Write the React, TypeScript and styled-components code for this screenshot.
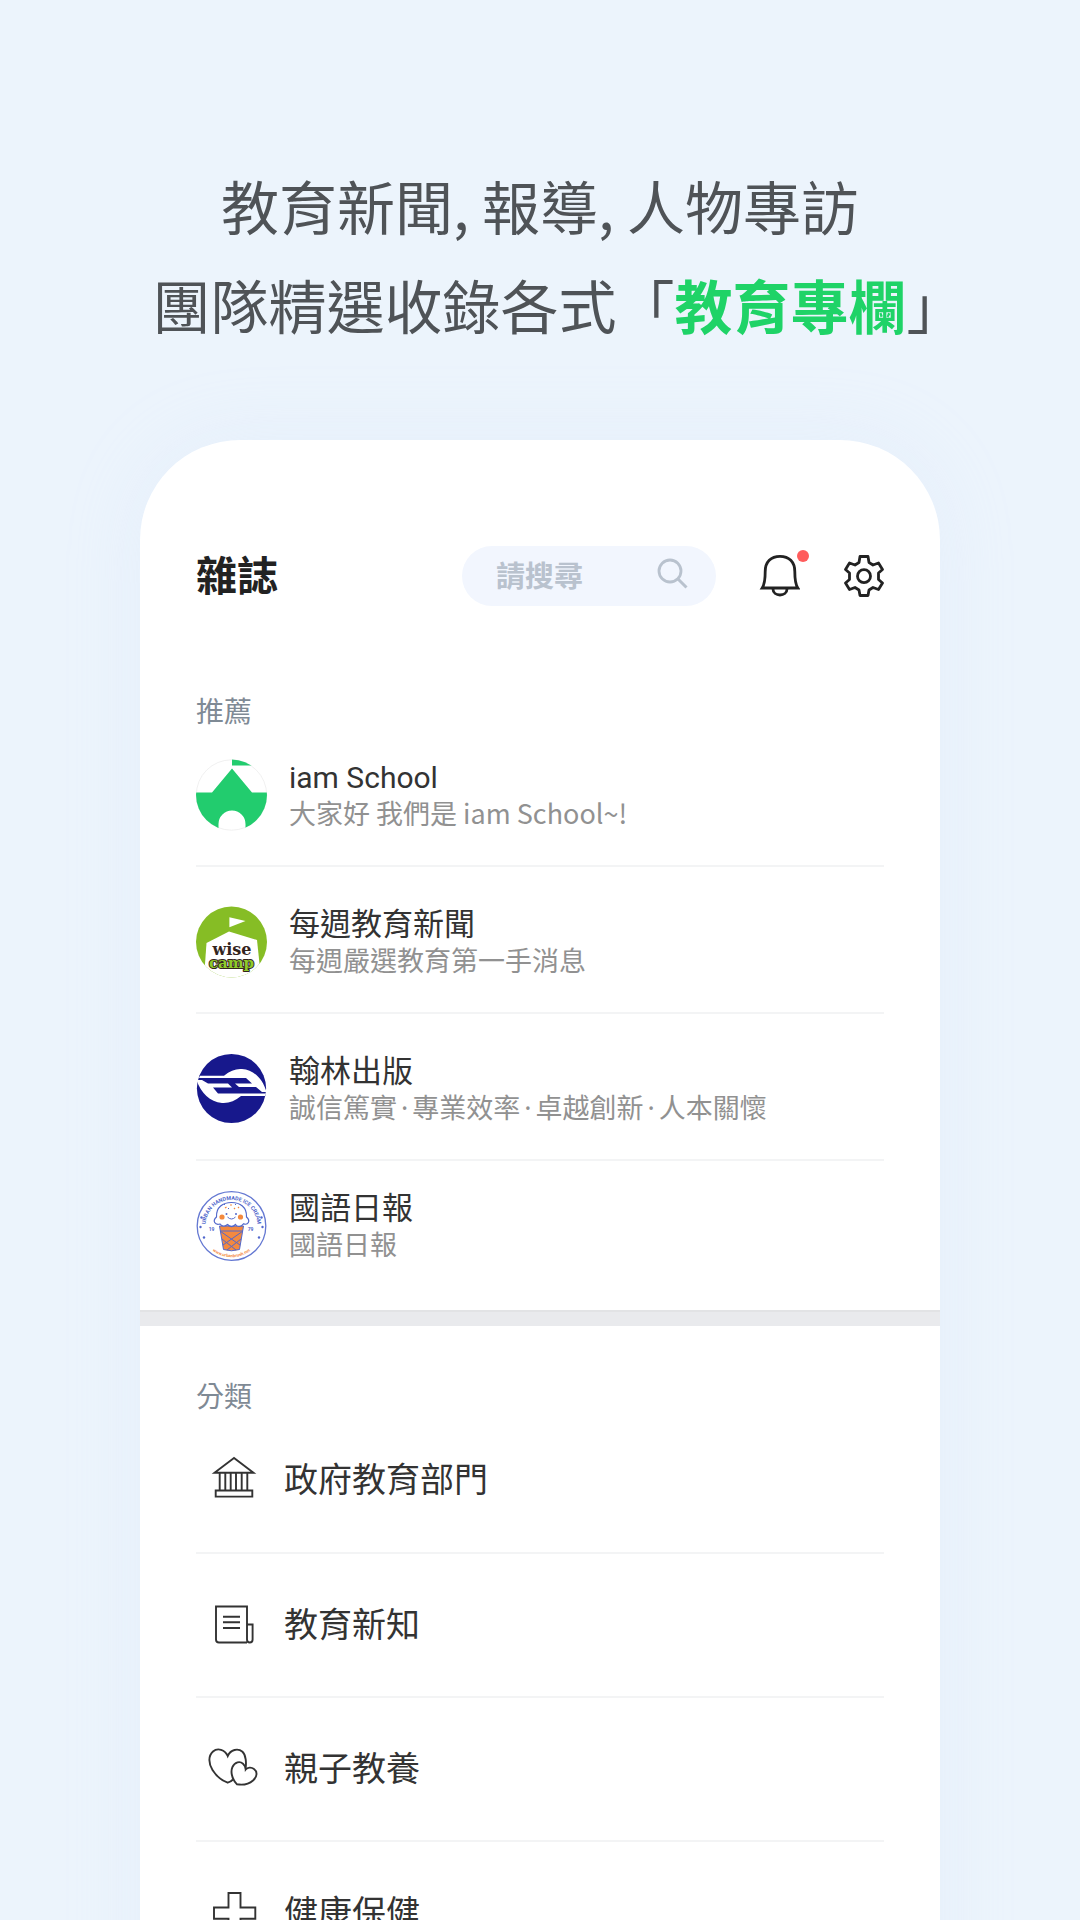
import React from "react";
import styled, { createGlobalStyle } from "styled-components";

const GlobalStyle = createGlobalStyle`
  *, *::before, *::after { box-sizing: border-box; }
  body {
    margin: 0;
    background: #ecf4fc;
    font-family: "Noto Sans CJK TC", "Noto Sans", sans-serif;
  }
`;

const Page = styled.div`
  display: flex;
  flex-direction: column;
  height: 100vh;
  overflow: hidden;
  padding: 156px 140px 0;
  background: #ecf4fc;
`;

const Headline = styled.h1`
  margin: 0 -60px 86px;
  color: #4f5357;
  font-size: 58px;
  font-weight: 400;
  line-height: 99px;
  text-align: center;
`;

const HeadlineLine = styled.span`
  display: block;
  white-space: nowrap;
`;

const Highlight = styled.strong`
  color: #1fd367;
  font-weight: 700;
`;

const HangingBracket = styled.span`
  margin-right: -8px;
  font-feature-settings: "halt";
`;

const Card = styled.main`
  flex: 1 0 auto;
  padding-top: 106px;
  border-radius: 100px 100px 0 0;
  background: #fff;
  box-shadow: 0 0 70px rgba(212, 228, 252, 0.28);
`;

const Header = styled.header`
  display: flex;
  align-items: center;
  padding: 0 56px;
`;

const Title = styled.h2`
  flex: 1;
  margin: 0;
  padding-bottom: 6px;
  color: #222;
  font-size: 41px;
  font-weight: 700;
  line-height: 54px;
`;

const SearchBox = styled.label`
  display: flex;
  align-items: center;
  width: 254px;
  height: 60px;
  padding: 0 28px 4px 34px;
  border-radius: 30px;
  background: #f2f6fe;
`;

const SearchInput = styled.input`
  flex: 1;
  min-width: 0;
  height: 44px;
  padding: 0;
  border: 0;
  outline: 0;
  background: transparent;
  color: #4f5357;
  font: 700 29px/44px "Noto Sans CJK TC", sans-serif;
  &::placeholder { color: #b9c2ce; opacity: 1; }
`;

const IconButton = styled.button`
  position: relative;
  display: flex;
  align-items: center;
  justify-content: flex-end;
  width: 42px;
  height: 44px;
  margin-left: 42px;
  padding: 0;
  border: 0;
  background: none;
`;

const Dot = styled.span`
  position: absolute;
  top: -4px;
  right: -9px;
  width: 12px;
  height: 12px;
  border-radius: 50%;
  background: #ff5c5c;
`;

const Section = styled.section<{ $top: number; $bottom: number }>`
  padding: ${(p) => p.$top}px 56px ${(p) => p.$bottom}px;
`;

const SectionLabel = styled.h3`
  margin: 0;
  padding-bottom: 2px;
  color: #7f8a95;
  font-size: 28px;
  font-weight: 400;
  line-height: 38px;
`;

const List = styled.ul`
  margin: 0;
  padding: 0;
  list-style: none;
`;

const Row = styled.li`
  border-bottom: 2px solid #f3f4f5;
  &:last-child { border-bottom: 0; }
`;

const MagazineLink = styled.a`
  display: flex;
  align-items: center;
  gap: 21px;
  padding: 36px 0 31px;
  color: inherit;
  text-decoration: none;
  ${Row}:first-child & { padding-top: 25px; }
  ${Row}:last-child & { padding: 26px 0 0; }
`;

const MagazineText = styled.div`
  display: flex;
  flex-direction: column;
  padding-bottom: 2px;
  line-height: 38px;
  white-space: nowrap;
`;

const MagazineName = styled.span`
  color: #333;
  font-size: 31px;
`;

const LatinName = styled.span`
  font-family: Roboto, sans-serif;
  font-size: 30px;
  line-height: 1;
`;

const MagazineNote = styled.span`
  color: #919191;
  font-size: 27px;
`;

const MiddleDot = styled.span`
  margin: 0 4px;
  font-family: "Noto Sans", sans-serif;
  line-height: 1;
`;

const Divider = styled.hr`
  height: 16px;
  margin: 0;
  border: 0;
  border-top: 2px solid #e2e3e5;
  background: #e9eaed;
`;

const CategoryLink = styled.a`
  display: flex;
  align-items: center;
  gap: 26px;
  height: 142px;
  padding: 0 0 2px 12px;
  color: #333;
  font-size: 34px;
  line-height: 48px;
  text-decoration: none;
  ${Row}:first-child & { height: 136px; padding-bottom: 10px; }
`;

const CategoryName = styled.span`
  padding-bottom: 2px;
`;

const Avatar = styled.svg`
  flex: none;
  width: 72px;
  height: 72px;
`;

const LineIcon = styled.svg`
  flex: none;
  width: 50px;
  height: 50px;
  fill: none;
  stroke: #333;
  stroke-width: 1.9;
`;

const SchoolLogo = () => (
  <Avatar viewBox="0 0 72 72" aria-hidden="true">
    <defs>
      <clipPath id="school-clip"><circle cx="35.5" cy="36" r="35.5" /></clipPath>
    </defs>
    <circle cx="35.5" cy="36" r="35.2" fill="#fff" stroke="#ececec" strokeWidth="0.8" />
    <g clipPath="url(#school-clip)" fill="#22cc6e">
      <path d="M36 0H72V6.5H36Z" />
      <path d="M0 33.5H16L36 9.5L56 33.5H72V72H49.5V65a13.5 13.5 0 0 0-27 0V72H0Z" />
    </g>
  </Avatar>
);

const WiseCampLogo = () => (
  <Avatar viewBox="0 0 72 72" aria-hidden="true">
    <defs>
      <clipPath id="camp-clip"><circle cx="35.5" cy="36" r="35.5" /></clipPath>
    </defs>
    <g clipPath="url(#camp-clip)">
      <rect width="72" height="72" fill="#86bd25" />
      <path d="M33 25.5L10.5 37L8 72H65L61 34Z" fill="#fff" />
      <path d="M33.4 11.3L49.5 15L33.4 21.3Z" fill="#fff" />
      <g fontFamily="DejaVu Serif, serif" fontWeight="700" textAnchor="middle">
        <text x="36" y="49" fontSize="16" fill="#33241d">wise</text>
        <text x="35.5" y="62" fontSize="15" fill="#8fcb2a" stroke="#33241d" strokeWidth="2" strokeLinejoin="round" paintOrder="stroke">camp</text>
      </g>
    </g>
  </Avatar>
);

const HanlinLogo = () => (
  <Avatar viewBox="0 0 72 72" aria-hidden="true">
    <circle cx="35.5" cy="35.5" r="34.6" fill="#17188c" />
    <g fill="#fff">
      <path d="M4 22.7H28C34 17.5 40 15.5 46 16C58 17 67 26 70.5 39H66L60 34H43L39 30.5H56L50 25H3Z" />
      <path d="M69 43H45C39 48 33 50.5 26 50C14 49 5 40 .5 27H6L12 30.5H32L36 34.5H17L22 40.5H70Z" />
    </g>
  </Avatar>
);

const IceCreamLogo = () => (
  <Avatar viewBox="0 0 72 72" aria-hidden="true">
    <defs>
      <path id="ice-top" d="M10.8 44A26 26 0 1 1 60.2 44" />
      <path id="ice-bottom" d="M14.5 59A31 31 0 0 0 56.5 59" />
    </defs>
    <circle cx="35.5" cy="36" r="34.3" fill="#fff" stroke="#6478d2" strokeWidth="1.3" />
    <g fontFamily="Roboto, sans-serif" fontWeight="700" textAnchor="middle">
      <text fontSize="5.4" fill="#5268cc"><textPath href="#ice-top" startOffset="50%">URBAN HANDMADE ICE CREAM</textPath></text>
      <text fontSize="4.3" fill="#f3893f"><textPath href="#ice-bottom" startOffset="50%">www.urbanbrush.net</textPath></text>
      <text x="15.5" y="41" fontSize="5" fill="#5268cc">19</text>
      <text x="54.5" y="41" fontSize="5" fill="#5268cc">79</text>
    </g>
    <g fill="#5268cc">
      <circle cx="5.5" cy="27.5" r="1.2" /><circle cx="4.5" cy="37" r="1.2" /><circle cx="8" cy="47.5" r="1.2" />
      <circle cx="65.5" cy="27.5" r="1.2" /><circle cx="66.5" cy="37" r="1.2" /><circle cx="63" cy="47.5" r="1.2" />
    </g>
    <path d="M23.5 36H47.5L43.5 59.5Q35.5 62 27.5 59.5Z" fill="#f3893f" stroke="#5268cc" strokeWidth="1" />
    <path d="M24 41L44 55M47 41L27 55M26 49L40 60M45 49L31 60M24 41H47" stroke="#5268cc" strokeWidth="1" fill="none" />
    <path d="M20.5 27C20 17 27 12.5 35.5 12.5S51 17 50.5 27C55 31 52 35.5 47.5 33.8C45 37 41 37 39.5 34.5C37 37 34 37 31.5 34.5C29 37 26 36.5 24 34C19 35.5 16 31 20.5 27Z" fill="#fff" stroke="#5268cc" strokeWidth="1.2" />
    <circle cx="26" cy="27" r="2.6" fill="#f3893f" /><circle cx="44.5" cy="27" r="2.6" fill="#f3893f" />
    <circle cx="30.5" cy="24" r="1" fill="#5268cc" /><circle cx="40" cy="24" r="1" fill="#5268cc" />
    <path d="M31.5 27Q35.5 31 39.5 27" fill="none" stroke="#5268cc" strokeWidth="1" />
    <path d="M29 18l1.5-1M34 15h2M38 18l1 1M42 17l1 1" stroke="#f3893f" strokeWidth="1.2" />
    <path d="M32 18l1 1M39 14l1 1M28 15l1-1" stroke="#5268cc" strokeWidth="1" />
  </Avatar>
);

const BankIcon = () => (
  <LineIcon viewBox="0 0 50 50" aria-hidden="true">
    <path d="M26 4L6.5 18.7H45.5Z" />
    <path d="M11.7 18.7V36.5M17.3 18.7V36.5M22.7 18.7V36.5M28 18.7V36.5M33.7 18.7V36.5M39.3 18.7V36.5M7.7 36.5H44.3V42.6H7.7Z" />
  </LineIcon>
);

const NewsIcon = () => (
  <LineIcon viewBox="0 0 50 50" aria-hidden="true">
    <path d="M39 43.5H11Q8 43.5 8 40.5V7.5H39V40.5Q39 43.5 41.8 43.5T44.6 40.5V25.5H39" />
    <path d="M15 17.7H32M15 23.3H32M15 29H32" />
  </LineIcon>
);

const HeartsIcon = () => (
  <LineIcon viewBox="0 0 50 50" aria-hidden="true">
    <path d="M37.5 25.5C38.5 20 38 12 34.5 8.8C30 4.8 22.5 6.5 19.7 13C17 6.5 9.5 4.5 5 8.5C0 13 .5 20.5 4.5 27C8 32.5 13.5 37.5 19.7 39.7Q22.5 39 25 36.5" />
    <path d="M37.7 26.5C37.5 21.5 33.5 18.3 29.5 19.4C24.5 20.8 22.8 26.5 23.8 31.5C24.6 35.5 26.5 38.8 29 41.3C34.5 42.2 41 41 45 37.5C49.5 33.5 49.5 28.5 46 26C43.5 24 39.5 24.2 37.7 26.5Z" />
  </LineIcon>
);

const CrossIcon = () => (
  <LineIcon viewBox="0 0 50 50" aria-hidden="true">
    <path d="M20.5 6H32.5V20.5H47.3V31.8H32.5V46.3H20.5V31.8H6V20.5H20.5Z" />
  </LineIcon>
);

const magazines = [
  { name: "iam School", notes: ["大家好 我們是 iam School~!"], Logo: SchoolLogo, latin: true },
  { name: "每週教育新聞", notes: ["每週嚴選教育第一手消息"], Logo: WiseCampLogo },
  { name: "翰林出版", notes: ["誠信篤實", "專業效率", "卓越創新", "人本關懷"], Logo: HanlinLogo },
  { name: "國語日報", notes: ["國語日報"], Logo: IceCreamLogo },
];

const categories = [
  { name: "政府教育部門", Icon: BankIcon },
  { name: "教育新知", Icon: NewsIcon },
  { name: "親子教養", Icon: HeartsIcon },
  { name: "健康保健", Icon: CrossIcon },
];

export default function App() {
  return (
    <Page>
      <GlobalStyle />
      <Headline>
        <HeadlineLine>教育新聞, 報導, 人物專訪</HeadlineLine>
        <HeadlineLine>
          團隊精選收錄各式「<Highlight>教育專欄</Highlight><HangingBracket>」</HangingBracket>
        </HeadlineLine>
      </Headline>
      <Card>
        <Header>
          <Title>雜誌</Title>
          <SearchBox>
            <SearchInput type="text" placeholder="請搜尋" aria-label="請搜尋" />
            <svg width="32" height="32" viewBox="0 0 32 32" fill="none" stroke="#b9c2ce" strokeWidth="2.8" aria-hidden="true">
              <circle cx="14" cy="13" r="11" />
              <path d="M22 21L30.5 29.5" strokeWidth="3" />
            </svg>
          </SearchBox>
          <IconButton type="button" aria-label="通知">
            <svg width="42" height="44" viewBox="0 0 42 44" fill="none" stroke="#222" strokeWidth="2.8" aria-hidden="true">
              <path d="M4.2 34C6.8 30 7.2 25 7.2 17.5C7.2 8 13 2.3 22 2.3S36.8 8 36.8 17.5C36.8 25 37.2 30 39.8 34Z" />
              <path d="M15 35C15 43 29 43 29 35" />
            </svg>
            <Dot />
          </IconButton>
          <IconButton type="button" aria-label="設定">
            <svg width="40" height="42" viewBox="0 0 40 42" fill="none" stroke="#222" strokeWidth="2.8" strokeLinejoin="round" aria-hidden="true">
              <path d="M16 1.5H24L25 7.5L29 10L34.5 8L38.5 14.5L34.5 18V24.5L38.5 28L34.5 34.5L29 32.5L25 35L24 40.5H16L15 35L11 32.5L5.5 34.5L1.5 28L5.5 24.5V18L1.5 14.5L5.5 8L11 10L15 7.5Z" />
              <circle cx="20" cy="21.2" r="6.5" />
            </svg>
          </IconButton>
        </Header>

        <Section $top={85} $bottom={45}>
          <SectionLabel>推薦</SectionLabel>
          <List>
            {magazines.map(({ name, notes, Logo, latin }) => (
              <Row key={name}>
                <MagazineLink href="#">
                  <Logo />
                  <MagazineText>
                    <MagazineName>{latin ? <LatinName>{name}</LatinName> : name}</MagazineName>
                    <MagazineNote>
                      {notes.map((note, i) => (
                        <React.Fragment key={note}>
                          {i > 0 && <MiddleDot>·</MiddleDot>}
                          {note}
                        </React.Fragment>
                      ))}
                    </MagazineNote>
                  </MagazineText>
                </MagazineLink>
              </Row>
            ))}
          </List>
        </Section>

        <Divider />

        <Section $top={50} $bottom={40}>
          <SectionLabel>分類</SectionLabel>
          <List>
            {categories.map(({ name, Icon }) => (
              <Row key={name}>
                <CategoryLink href="#">
                  <Icon />
                  <CategoryName>{name}</CategoryName>
                </CategoryLink>
              </Row>
            ))}
          </List>
        </Section>
      </Card>
    </Page>
  );
}
